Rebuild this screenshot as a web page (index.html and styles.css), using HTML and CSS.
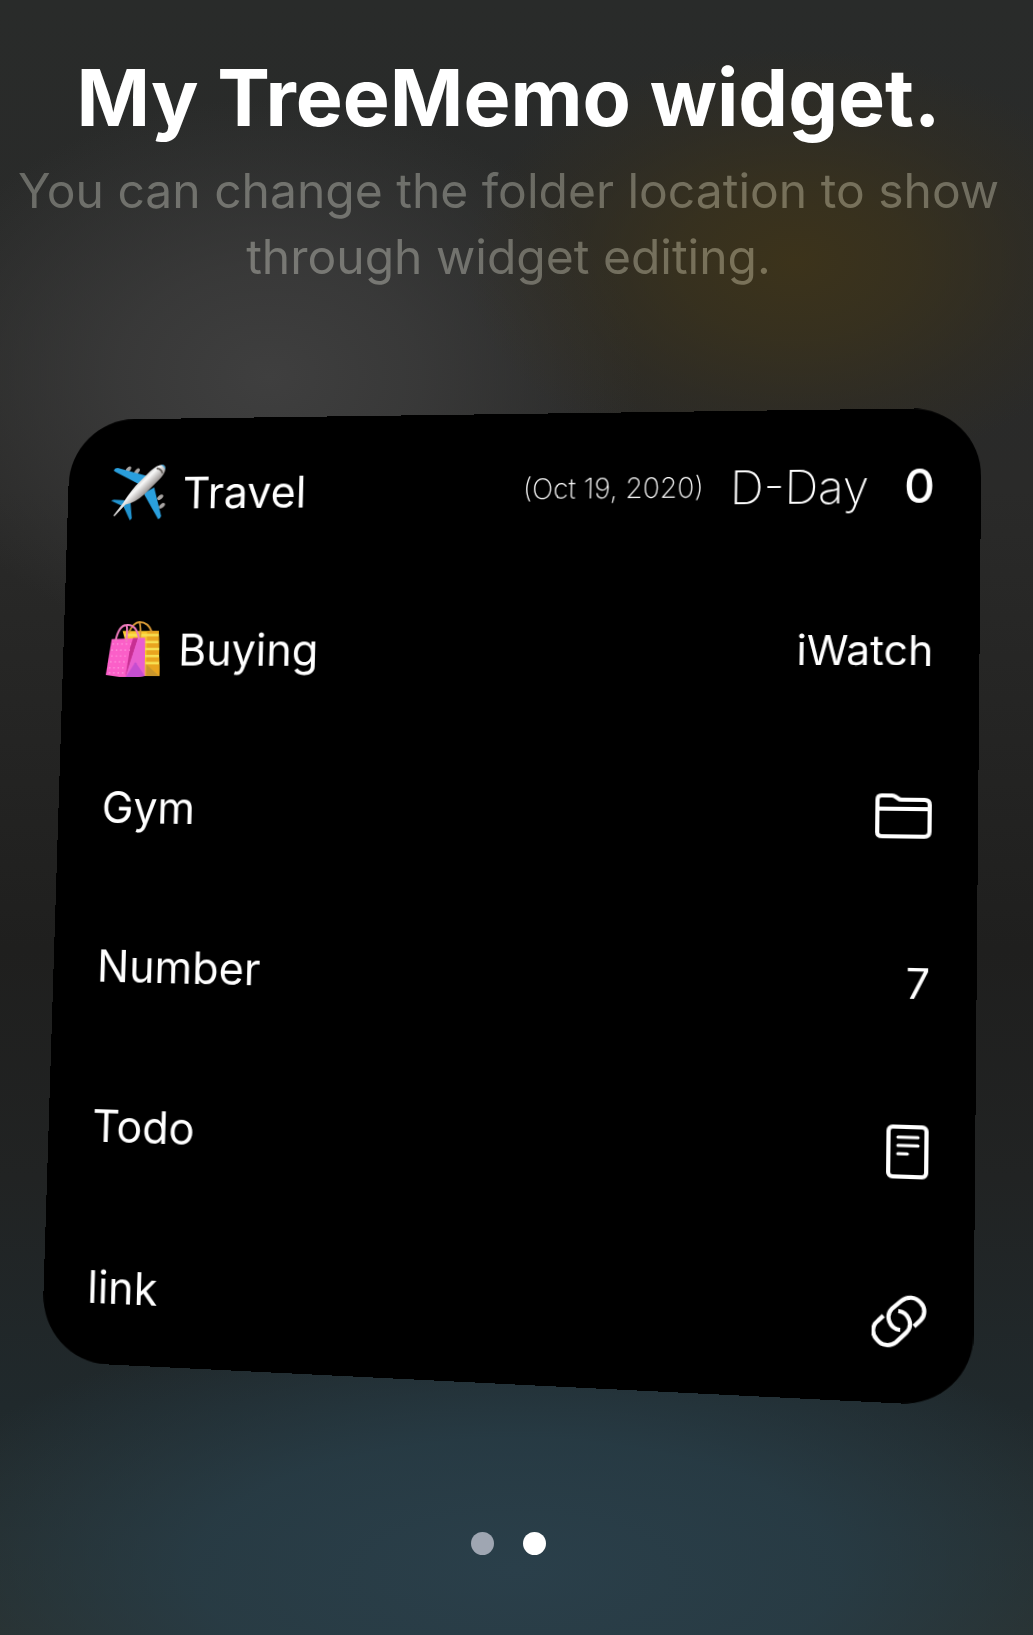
FILE: index.html
```html
<!DOCTYPE html>
<html lang="en">
<head>
<meta charset="utf-8">
<meta name="viewport" content="width=device-width, initial-scale=1">
<title>My TreeMemo widget</title>
<link rel="stylesheet" href="styles.css">
</head>
<body>
<main class="page">
  <header class="intro">
    <h1 class="title">My TreeMemo widget.</h1>
    <p class="subtitle">You can change the folder location to show through widget editing.</p>
  </header>

  <ul class="widget">
    <li class="row">
      <span class="label">
        <svg class="emoji" viewBox="0 0 56 56" role="img" aria-label="Airplane">
          <defs>
            <linearGradient id="fuselage" x1="20" y1="22" x2="32" y2="34" gradientUnits="userSpaceOnUse">
              <stop offset="0" stop-color="#bdbdbd"/><stop offset=".35" stop-color="#f8f8f8"/><stop offset="1" stop-color="#8c8684"/>
            </linearGradient>
          </defs>
          <g fill="#a9a5a3">
            <ellipse cx="17" cy="4.500" rx="3.600" ry="2" transform="rotate(-50 17 4.500)"/>
            <ellipse cx="26" cy="6.500" rx="3.600" ry="2" transform="rotate(-50 26 6.500)"/>
            <ellipse cx="50.500" cy="33" rx="3.600" ry="2" transform="rotate(-40 50.500 33)"/>
            <ellipse cx="52.500" cy="41.500" rx="3.600" ry="2" transform="rotate(-40 52.500 41.500)"/>
          </g>
          <path fill="#2a9fdd" d="M2 5q1-2 4-2l33 9-6 10L4 7q-2-1-2-2z"/>
          <path fill="#2a9fdd" d="M35 28l9-5 8 29q-1 3-3 3L34 30z"/>
          <path fill="#2193cf" d="M0 36l3-1 16 1-4 7zM13 42l7-5 2 17-2 2z"/>
          <path fill="url(#fuselage)" d="M15 40l-11 12-1-1 10-13q3-6 12-17L40 6q9-8 14-5 3 5-4 13L34 30q-10 9-19 10z"/>
          <path fill="#2a9fdd" d="M50 0q5 0 5 5-1-3-5-5z"/>
          <path fill="none" stroke="#56504c" stroke-width="1.500" d="M46 4q5 0 6 5"/>
        </svg>
        Travel
      </span>
      <span class="value">
        <time class="date" datetime="2020-10-19">(Oct 19, 2020)</time>
        <span class="dday">D-Day</span>
        <span class="days">0</span>
      </span>
    </li>
    <li class="row">
      <span class="label">
        <svg class="emoji" viewBox="0 0 56 56" role="img" aria-label="Shopping bags">
          <path fill="#fbc72b" d="M16 10h37l2 45H29z"/>
          <path fill="#e9a51f" d="M41 10h12l2 45-14-12z"/>
          <path stroke="#f7e154" stroke-width="2.500" d="M18 14h35M28 21h25M34 28h20M38 35h16M40 42h14"/>
          <path fill="#c9962b" d="M41 55V43l14 12z"/>
          <path fill="none" stroke="#d99a35" stroke-width="1.800" d="M22 12q5-11 11-11 2 6 1 16M33 1q9 0 13 10"/>
          <path fill="#fb5fc8" d="M5 18l34-1 1 38-19 2-21-3z"/>
          <path fill="#c72f92" d="M27 17h5L20 57l4-30z"/>
          <path fill="#e95fd0" d="M32 17h7l1 38-20 2z"/>
          <path fill="#c54ed0" d="M20 57l10-16 10 14z"/>
          <path fill="none" stroke="#ff9ce0" stroke-width="1.200" stroke-dasharray="1.500 3" d="M6 23h19M5 29h19M5 35h18M4 41h18M3 47h17M3 52h16"/>
          <path fill="none" stroke="#ef7bbd" stroke-width="2" d="M9 20q3-16 11-16 1 5 0 17M20 4q10-1 13 14"/>
        </svg>
        Buying
      </span>
      <span class="value">iWatch</span>
    </li>
    <li class="row">
      <span class="label">Gym</span>
      <svg class="icon icon-folder" viewBox="0 0 54 44" role="img" aria-label="Folder">
        <path d="M2 38V6q0-4 4-4h10q2 0 3 1l3 2q1 1 3 1h22q5 0 5 5v26q0 5-5 5H7q-5 0-5-4zM2 15h50"/>
      </svg>
    </li>
    <li class="row">
      <span class="label">Number</span>
      <span class="value">7</span>
    </li>
    <li class="row">
      <span class="label">Todo</span>
      <svg class="icon icon-note" viewBox="0 0 40 52" role="img" aria-label="Note">
        <rect x="2" y="2" width="36" height="48" rx="4"/>
        <path class="note-lines" d="M11 12h19M11 20h19M11 28h9"/>
      </svg>
    </li>
    <li class="row">
      <span class="label">link</span>
      <svg class="icon icon-link" viewBox="0 0 52 52" role="img" aria-label="Link">
        <path d="M11 21L6 26A12 12 0 0 0 5 44A12.500 12.500 0 0 0 23 46L33 36A12 12 0 0 0 25 16M27 34A12 12 0 0 1 19 14L28 6A12.500 12.500 0 0 1 46 7A12 12 0 0 1 46 24L40 30"/>
      </svg>
    </li>
  </ul>

  <nav class="dots" aria-label="Pages">
    <button class="dot" type="button" aria-label="Page 1"></button>
    <button class="dot dot-current" type="button" aria-label="Page 2" aria-current="true"></button>
  </nav>
</main>
</body>
</html>
```
FILE: styles.css
```css
* { box-sizing: border-box; }

body {
  margin: 0;
  background: #282a29;
  color: #fff;
  font-family: Inter, "Noto Sans", sans-serif;
}

.page {
  min-height: 100vh;
  padding: 48px 16px 80px 0;
  background:
    radial-gradient(ellipse 32% 13% at 77% 16%, #3c331b 0%, #3a321ccc 35%, #38301c55 70%, #38301c00 100%),
    radial-gradient(ellipse 36% 17% at 26% 23%, #3f3f3f 0%, #3c3c3ccc 40%, #3a3a3a00 100%),
    radial-gradient(ellipse 62% 16% at 50% 96%, #2a3f4a 0%, #283e49cc 50%, #283c4600 100%),
    linear-gradient(#292b2a 0%, #2a2a29 30%, #1f1f1e 58%, #212323 72%, #20292c 86%, #29302e 100%);
}

.intro {
  text-align: center;
}

.title {
  margin: 0 0 12px;
  font-size: 79px;
  font-weight: 700;
  line-height: 98px;
}

.subtitle {
  margin: 0;
  padding: 0 12px;
  font-size: 48px;
  line-height: 66px;
  color: #40403c;
  mix-blend-mode: plus-lighter;
}

.widget {
  display: flex;
  flex-direction: column;
  justify-content: space-between;
  min-height: 970px;
  margin: 118px 52px 0 41px;
  padding: 45px 44px 46px 46px;
  list-style: none;
  background: #000;
  border-radius: 68px;
  transform: perspective(1332px) rotateX(1.95deg) rotateY(-4.9deg) rotateZ(1.16deg);
}

.row {
  display: flex;
  align-items: center;
  justify-content: space-between;
  min-height: 64px;
}

.label,
.value {
  display: flex;
  align-items: center;
}

.label {
  gap: 18px;
  font-size: 45px;
}

.value { font-size: 41px; }

.date {
  margin-right: 26px;
  font-size: 28px;
  font-weight: 200;
}

.dday {
  margin-right: 34px;
  font-size: 46px;
  font-weight: 200;
}

.days {
  font-size: 46px;
  font-weight: 500;
}

.emoji {
  width: 58px;
  height: 58px;
}

.icon {
  fill: none;
  stroke: #fff;
  stroke-width: 4;
  stroke-linejoin: round;
}

.icon-folder { width: 54px; height: 44px; }
.icon-note { width: 40px; height: 52px; }
.icon-link { width: 52px; height: 52px; }

.note-lines {
  stroke-width: 3;
  stroke-linecap: round;
}

.dots {
  display: flex;
  justify-content: center;
  gap: 29px;
  margin-top: 154px;
}

.dot {
  width: 23px;
  height: 23px;
  padding: 0;
  border: 0;
  border-radius: 50%;
  background: #9fa6b2;
}

.dot-current { background: #fff; }
```
